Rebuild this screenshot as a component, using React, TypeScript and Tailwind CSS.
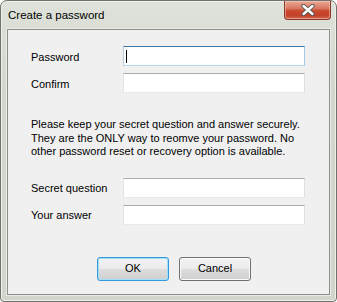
const fieldBase =
  "h-[20px] w-[182px] border bg-white border-t-[#abadb3] border-l-[#e2e3ea] border-r-[#dbdfe6] border-b-[#e3e9ef]";

const Field = ({ focused = false }: { focused?: boolean }) => (
  <div
    className={
      focused
        ? "relative h-[20px] w-[182px] border bg-white border-t-[#3d7bad] border-l-[#b5cfe7] border-r-[#a4c9e3] border-b-[#b7d9ed]"
        : fieldBase
    }
  >
    {focused && <div className="absolute left-[2px] top-[3px] h-[13px] w-px bg-black" />}
  </div>
);

const Row = ({ label, focused }: { label: string; focused?: boolean }) => (
  <div className="flex items-center">
    <span className="w-[92px] pt-[2px]">{label}</span>
    <Field focused={focused} />
  </div>
);

const App = () => {
  return (
    <div className="h-[302px] w-[337px] bg-white font-['Liberation_Sans',Arial,sans-serif] text-[11px] text-black">
      <div className="flex h-full flex-col rounded-t-[7px] rounded-b-[4px] border border-[#6f716d] bg-[linear-gradient(180deg,#dfe2da_0%,#d3d6cc_30%,#d2d5cb_100%)] shadow-[inset_0_0_0_1px_#eef0ea]">
        {/* title bar */}
        <div className="flex h-[28px] items-start justify-between">
          <span className="pl-[7px] pt-[7px] text-[11.5px] leading-[15px]">Create a password</span>
          <div className="mr-[5px] flex h-[19px] w-[47px] items-center justify-center rounded-b-[4px] border border-t-0 border-[#8a3a2b] bg-[linear-gradient(180deg,#e8a894_0%,#d97a62_40%,#c9472c_55%,#c34128_80%,#d06a52_100%)] shadow-[inset_0_0_0_1px_rgba(255,220,210,0.45)]">
            <svg width="14" height="12" viewBox="0 0 14 12">
              <path d="M2.5 2 L11.5 10 M11.5 2 L2.5 10" stroke="#4f4f4f" strokeWidth="4.2" strokeLinecap="round" />
              <path d="M2.5 2 L11.5 10 M11.5 2 L2.5 10" stroke="#ffffff" strokeWidth="2.4" strokeLinecap="round" />
            </svg>
          </div>
        </div>

        {/* client area */}
        <div className="mx-[6px] mb-[6px] flex flex-1 flex-col border border-[#8d8f8b] bg-[#f0f0f0] pl-[23px] pt-[16px] shadow-[0_0_0_1px_#e9eae5]">
          <div className="flex flex-col gap-[7px]">
            <Row label="Password" focused />
            <Row label="Confirm" />
          </div>

          <p className="mt-[25px] leading-[13.5px]">
            Please keep your secret question and answer securely.
            <br />
            They are the ONLY way to reomve your password. No
            <br />
            other password reset or recovery option is available.
          </p>

          <div className="mt-[19px] flex flex-col gap-[7px]">
            <Row label="Secret question" />
            <Row label="Your answer" />
          </div>

          <div className="mt-[32px] flex gap-[10px] pl-[66px]">
            <button className="h-[24px] w-[72px] rounded-[3px] border border-[#3399dd] bg-[linear-gradient(180deg,#f2f2f2_0%,#ebebeb_50%,#dddddd_50%,#cfcfcf_100%)] shadow-[inset_0_0_0_1px_#9fe0f7]">
              OK
            </button>
            <button className="h-[24px] w-[72px] rounded-[3px] border border-[#707070] bg-[linear-gradient(180deg,#f2f2f2_0%,#ebebeb_50%,#dddddd_50%,#cfcfcf_100%)] shadow-[inset_0_0_0_1px_#fbfbfb]">
              Cancel
            </button>
          </div>
        </div>
      </div>
    </div>
  );
};

export default App;
